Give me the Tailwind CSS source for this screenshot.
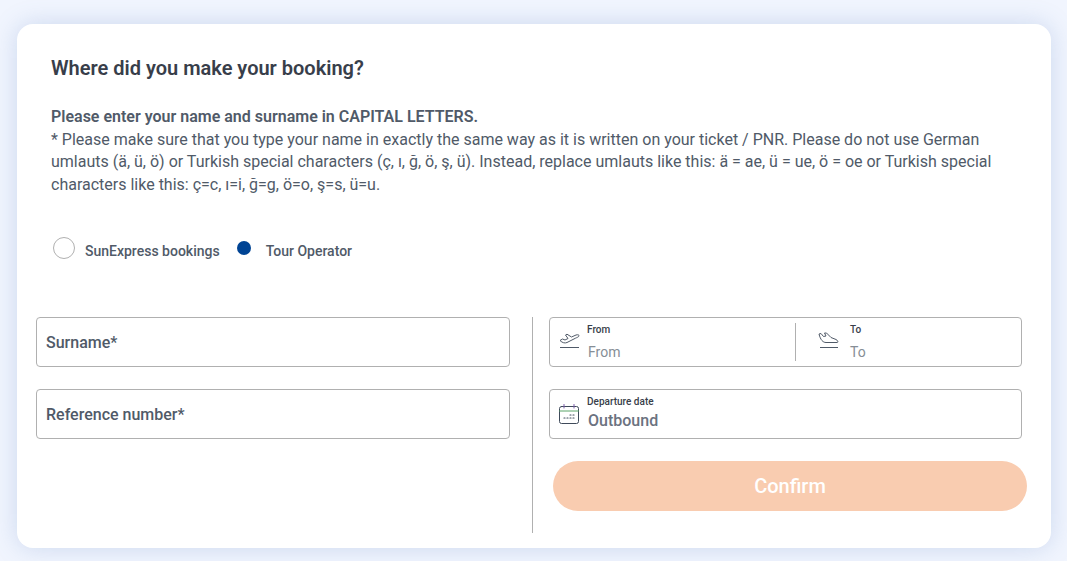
<!DOCTYPE html>
<html lang="en">
  <head>
    <meta name="viewport" content="width=device-width, initial-scale=1.0" />
    <title>Booking</title>
    <script src="https://cdn.jsdelivr.net/npm/@tailwindcss/browser@4"></script>
  </head>
  <body class="h-screen w-screen overflow-hidden bg-[#f1f5fe] font-['Roboto',sans-serif] text-[#505a68] pt-6 pl-[17px]">
    <div class="w-[1034px] h-[524px] bg-white rounded-[16px] shadow-[0_0_24px_rgba(90,130,190,0.25)]">
      <div class="pl-[34px] pr-10 pt-[32px]">
        <h1 class="text-[20px] leading-6 font-semibold text-[#383e4a]">Where did you make your booking?</h1>
        <div class="mt-[26px] h-[91px] text-[16px] leading-[22.6px] w-[950px]">
          <p class="font-semibold">Please enter your name and surname in CAPITAL LETTERS.</p>
          <p>* Please make sure that you type your name in exactly the same way as it is written on your ticket / PNR. Please do not use German umlauts (ä, ü, ö) or Turkish special characters (ç, ı, ğ, ö, ş, ü). Instead, replace umlauts like this: ä = ae, ü = ue, ö = oe or Turkish special characters like this: ç=c, ı=i, ğ=g, ö=o, ş=s, ü=u.</p>
        </div>
        <div class="mt-[40px] flex items-start pl-[2px] text-[14px] font-medium h-[24px]">
          <span class="w-[22px] h-[22px] rounded-full border border-[#b0b0b0] bg-white"></span>
          <span class="ml-[10px] mt-[4px] leading-[20px]">SunExpress bookings</span>
          <span class="ml-[17px] w-[14px] h-[14px] mt-[4px] rounded-full bg-[#004494]"></span>
          <span class="ml-[15px] mt-[4px] leading-[20px]">Tour Operator</span>
        </div>
      </div>

      <div class="mt-[47px] flex pl-[19px]">
        <div class="w-[474px] flex flex-col gap-[22px] pt-[9px]">
          <div class="h-[50px] border border-[#b0b0b0] rounded-[4px] flex items-center px-[9px] pt-[1px] text-[16px] font-medium">Surname*</div>
          <div class="h-[50px] border border-[#b0b0b0] rounded-[4px] flex items-center px-[9px] pt-[1px] text-[16px] font-medium">Reference number*</div>
        </div>
        <div class="ml-[22px] w-px h-[216px] mt-[9px] bg-[#b0b0b0]"></div>
        <div class="ml-[16px] w-[478px] pt-[9px]">
          <div class="w-[473px] h-[50px] border border-[#b0b0b0] rounded-[4px] flex items-center">
            <div class="w-[245px] h-full flex relative">
              <svg class="absolute left-[9px] top-[14px]" width="21" height="17" viewBox="0 0 21 17" fill="none" stroke="#505a68" stroke-width="1" stroke-linejoin="round"><path d="M1 8.5 L3.5 7 L6 8 L9 6.5 L6.5 3 L8 2.2 L12.5 5 L17 3 C19 2.4 20.3 3 20 4 C19.6 5 18 5.5 16.5 6.2 L8 10.5 C6 11.4 3.5 11 1 8.5 Z" /><path d="M1 15.5 H20" /></svg>
              <div class="pl-[37px]">
                <p class="text-[10px] leading-3 font-medium text-[#383e4a] pt-[6px]">From</p>
                <p class="text-[14px] leading-4 text-[#868e96] mt-[8px] pl-[1px]">From</p>
              </div>
            </div>
            <div class="w-px h-[38px] bg-[#b0b0b0]"></div>
            <div class="flex-1 h-full flex relative">
              <svg class="absolute left-[22px] top-[14px]" width="21" height="17" viewBox="0 0 21 17" fill="none" stroke="#505a68" stroke-width="1" stroke-linejoin="round"><path d="M1 2 L3 1.5 L5.5 4.5 L8 4 L6.5 1 L8.5 1 L13 5.5 L18 7.5 C20 8.5 20.5 10.5 19 10.5 H8 C5 10.5 2.5 8 1 2 Z" /><path d="M2 15.5 H20" /></svg>
              <div class="pl-[54px]">
                <p class="text-[10px] leading-3 font-medium text-[#383e4a] pt-[6px]">To</p>
                <p class="text-[14px] leading-4 text-[#868e96] mt-[8px]">To</p>
              </div>
            </div>
          </div>
          <div class="w-[473px] h-[50px] mt-[22px] border border-[#b0b0b0] rounded-[4px] flex relative">
            <svg class="absolute left-[9px] top-[14px]" width="21" height="21" viewBox="0 0 21 21" fill="none" stroke-linecap="round"><rect x="0.5" y="2.5" width="19" height="17" rx="2" stroke="#3f4a5a" /><path d="M0.5 7 H19.5" stroke="#5aa469" /><path d="M5 0.5 V4 M15 0.5 V4" stroke="#7a5aa8" /><path d="M5 14 H6 M8 14 H9 M11 14 H12 M14 14 H15 M14 11 H15 M11 11 H12" stroke="#3f4a5a" stroke-width="1.2" /></svg>
            <div class="pl-[37px]">
              <p class="text-[10px] leading-3 font-medium text-[#383e4a] pt-[6px]">Departure date</p>
              <p class="text-[16px] leading-5 font-medium text-[#6b7280] mt-[3px] pl-[1px]">Outbound</p>
            </div>
          </div>
          <button class="block mt-[22px] ml-[4px] w-[474px] h-[50px] rounded-[25px] bg-[#f9ccb0] text-white text-[20px] font-medium">Confirm</button>
        </div>
      </div>
    </div>
  </body>
</html>
